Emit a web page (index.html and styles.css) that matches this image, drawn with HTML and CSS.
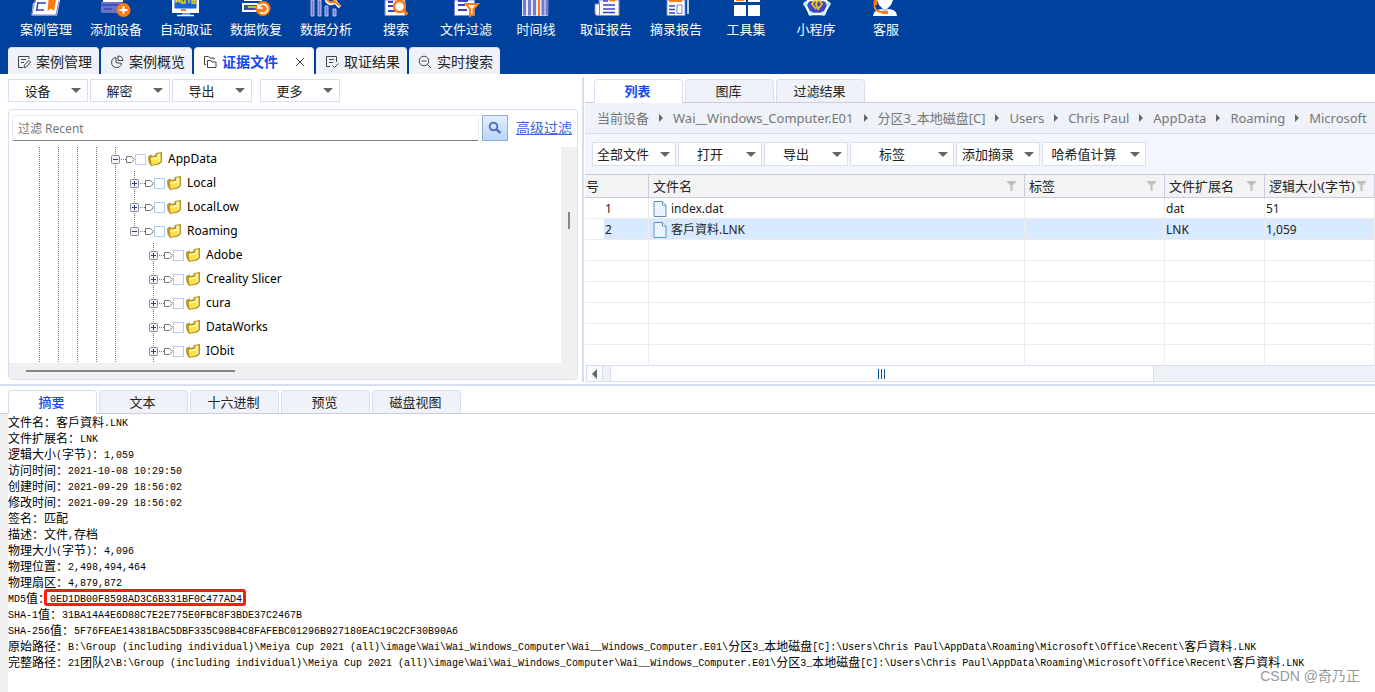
FILE: index.html
```html
<!DOCTYPE html>
<html lang="zh-CN">
<head>
<meta charset="utf-8">
<title>证据文件</title>
<link rel="stylesheet" href="styles.css">
</head>
<body>
<svg class="defs" aria-hidden="true">
  <symbol id="plus" viewBox="0 0 9 9"><rect x=".5" y=".5" width="8" height="8" rx="1" fill="#f2f2f2" stroke="#8c8c8c"/><path d="M2 4.500h5M4.500 2v5" stroke="#2b3f8c"/></symbol>
  <symbol id="minus" viewBox="0 0 9 9"><rect x=".5" y=".5" width="8" height="8" rx="1" fill="#f2f2f2" stroke="#8c8c8c"/><path d="M2 4.500h5" stroke="#2b3f8c"/></symbol>
  <symbol id="tag" viewBox="0 0 14 7"><path d="M0 3h1v1H0zM2 3h1v1H2zM4 3h1v1H4z" fill="#777"/><path d="M5.500.500h5l3 3-3 3h-5z" fill="#fff" stroke="#777"/></symbol>
  <symbol id="folder" viewBox="0 0 15 14"><path d="M.5 4.500L3 3l1.500 1.500L8 3.500V1.500l5.500-1V10L11 12l-8 1.500L1 10z" fill="#c99f22" stroke="#a07a12" stroke-width=".8"/><path d="M9 2l3.500-.8v8.300L10 11z" fill="#fdf0a0"/><path d="M3 6l8-1.500-1 7-6.500 1.500z" fill="#fde04a"/><path d="M3 6l8-1.500-.3 2-7.500 1.800z" fill="#fff19a"/></symbol>
  <symbol id="funnel" viewBox="0 0 9 10"><path d="M0 0h9v1L5.500 4.500V10h-2V4.500L0 1z" fill="#c0c0c0"/></symbol>
  <symbol id="page" viewBox="0 0 14 16"><path d="M1 .500h8.500L13 4v11.500H1z" fill="#e9f4fe" stroke="#6291c0"/><path d="M9.500.500V4H13" fill="#fff" stroke="#6291c0"/></symbol>
</svg>

<header class="banner">
  <nav class="tools" aria-label="工具">
    <button class="tool"><svg viewBox="0 0 32 18"><path d="M6 0h24l-3 15.500H1.500L3 3h2z" fill="#fff"/><path d="M5 0L2 14.500M29 1l-3 14H2" stroke="#7a80cf" fill="none"/><path d="M8 3h8M7 10h7M8 2L6.500 11" stroke="#2e3fc4" stroke-width="1.500" fill="none"/><path d="M18.500 0H26l-2 11-3-2.500L17.500 11z" fill="#ff7a0f"/></svg><span>案例管理</span></button>
    <button class="tool"><svg viewBox="0 0 32 18"><path d="M1 3l3-3h18v13H1z" fill="#6a72c6"/><path d="M3 1h20" stroke="#fff" stroke-width="2"/><path d="M1 5h20M4 9h8" stroke="#3348b4" stroke-width="1.500"/><circle cx="23.500" cy="10" r="7" fill="#ff7a0f"/><path d="M19.500 10h8M23.500 6v8" stroke="#fff" stroke-width="2"/></svg><span>添加设备</span></button>
    <button class="tool"><svg viewBox="0 0 32 18"><path d="M2 0h27v13H2z" fill="#fff"/><path d="M4.500 0h22v8.500h-22z" fill="#1763da"/><path d="M6 3V0M10 3V0M6 1h4M12 0v3h3V0M19 3V0M22 0h3v3h-3z" fill="none" stroke="#ffe000" stroke-width="1.300"/><path d="M11 9h5v2h-5z" fill="#ff7a0f"/><path d="M12 14h8" stroke="#8b91db" stroke-width="2"/><path d="M7 15.500h17" stroke="#fff" stroke-width="1.500"/></svg><span>自动取证</span></button>
    <button class="tool"><svg viewBox="0 0 32 18"><path d="M4 0h18M3 4h16v7H3z" stroke="#fff" stroke-width="2" fill="#3d4cba"/><path d="M8 7h8" stroke="#ffe000" stroke-width="1.500"/><circle cx="23" cy="8.500" r="7.500" fill="#ff7a0f"/><path d="M20 12a4.500 4.500 0 1 0-1-5M18 4v4h5" fill="none" stroke="#fff" stroke-width="1.700"/></svg><span>数据恢复</span></button>
    <button class="tool"><svg viewBox="0 0 32 18"><path d="M1 0h3v16H1zM8 0h3v16H8zM15 6h3v10h-3zM23 9h3v7h-3z" fill="#7278cd" stroke="#d9dbf7" stroke-width=".8"/><path d="M16 0q5 7 10 0M24 1l6 6" fill="none" stroke="#fff" stroke-width="3.500"/><path d="M17 0q4 5 8 0M24 1l6 5" fill="none" stroke="#ff7a0f" stroke-width="2"/></svg><span>数据分析</span></button>
    <button class="tool"><svg viewBox="0 0 32 18"><path d="M5 0h20v15.500H5z" fill="#fff" stroke="#8589d0"/><path d="M8 2h5M8 6h5M8 11h7" stroke="#3940cb" stroke-width="2"/><circle cx="19.500" cy="6.500" r="5.500" fill="#fff" stroke="#ff7a0f" stroke-width="2.500"/><path d="M23.500 10.500l4 4" stroke="#ff7a0f" stroke-width="3"/></svg><span>搜索</span></button>
    <button class="tool"><svg viewBox="0 0 32 18"><path d="M4.500 0h20v15.500h-20z" fill="#fff" stroke="#8589d0"/><path d="M8 1h10M8 5h7M8 10h9" stroke="#3940cb" stroke-width="2"/><path d="M16 4h12l-4.500 5v5L20 16V9z" fill="#fff" stroke="#ff7a0f" stroke-width="2"/></svg><span>文件过滤</span></button>
    <button class="tool"><svg viewBox="0 0 32 18"><path d="M2 0h26v16H2z" fill="#e7e8fb"/><path d="M4.500 0v15.500M9.500 0v15.500M14.500 0v15.500M23 0v15.500M27 0v15.500" stroke="#737bd0" stroke-width="3"/><path d="M19 0v16" stroke="#ff7a0f" stroke-width="2"/></svg><span>时间线</span></button>
    <button class="tool"><svg viewBox="0 0 32 18"><path d="M5 4h4V0h20v15.500H7Q4.500 15 5 12z" fill="#fff" stroke="#8589d0"/><path d="M9.500 2v13" stroke="#8589d0"/><path d="M13 1h5M13 5h12M13 9h12M13 12.500h12" stroke="#3940cb" stroke-width="1.500"/><path d="M20 0h5v2l-2.500-1L20 2z" fill="#ff7a0f"/></svg><span>取证报告</span></button>
    <button class="tool"><svg viewBox="0 0 32 18"><path d="M7 0h18v15.500H7z" fill="#fff" stroke="#8589d0"/><path d="M9 0h13v2H9z" fill="#ff7a0f"/><path d="M9 6h6M9 9.500h6M9 13h6" stroke="#3940cb" stroke-width="1.500"/><path d="M17 5h5v8.500h-5z" fill="#fff" stroke="#777dcc"/><path d="M28 0v14" stroke="#fff" stroke-width="1.500"/></svg><span>摘录报告</span></button>
    <button class="tool"><svg viewBox="0 0 32 18"><path d="M4 0h12v2H4zM18 0h12v2H18zM4 5h12v11H4zM18 5h12v11H18z" fill="#fff"/><path d="M6 0h8v1H6z" fill="#ff7a0f"/></svg><span>工具集</span></button>
    <button class="tool"><svg viewBox="0 0 32 18"><path d="M9 0L5 4l5 10h14l5-10-4-4z" fill="#3e48cb" stroke="#fff" stroke-width="2.500"/><circle cx="5.500" cy="4" r="2.200" fill="#c9f3ff"/><circle cx="28.500" cy="4" r="2.200" fill="#c9f3ff"/><circle cx="10.500" cy="13.500" r="2.200" fill="#c9f3ff"/><circle cx="23.500" cy="13.500" r="2.200" fill="#c9f3ff"/><path d="M15 0l-3 4 4 5M18 0l-2 4 2 5 4-5-3-4" fill="none" stroke="#ffc400" stroke-width="1.700"/></svg><span>小程序</span></button>
    <button class="tool"><svg viewBox="0 0 32 18"><path d="M7 0h16l-2 5-4 4h-4L9 5z" fill="#fff"/><path d="M3 16q0-6 9-7h7q8 1 8 7z" fill="#fff"/><path d="M12 9l3 4 4-4" fill="#bfc4f0"/><path d="M4.500 1v6q1 5 10 5.500" fill="none" stroke="#ff7a0f" stroke-width="1.800"/><path d="M4 0h3v5H4zM12 11h6v3h-6z" fill="#ff7a0f"/></svg><span>客服</span></button>
  </nav>
  <nav class="views" aria-label="视图">
    <button class="view"><svg viewBox="0 0 14 14"><path d="M12 4V1.500H1.500v11H6M4 4.500h5M4 7.500h3M7 12.500l.5-2.500 4.500-4.500 1.500 1.500L9.500 12z"/></svg>案例管理</button>
    <button class="view"><svg viewBox="0 0 14 14"><path d="M6 2.500a5 5 0 1 0 5.500 6L6 7.500zM8 1v4.500h5A5 5 0 0 0 8 1z"/></svg>案例概览</button>
    <button class="view view-on"><svg viewBox="0 0 14 14"><path d="M3 9.500H1.500v-8h4L7 3h4v1.500M4.500 5.500H8L9 7h4v5.500H4.500z"/></svg>证据文件<svg class="close" viewBox="0 0 14 14"><path d="M3 3l8 8M11 3l-8 8"/></svg></button>
    <button class="view"><svg viewBox="0 0 14 14"><path d="M5 11.500H1.500v-10h10V7M4 4.500h5M4 7.500h4M7.500 10.500l2 2 4-4"/></svg>取证结果</button>
    <button class="view"><svg viewBox="0 0 14 14"><circle cx="6" cy="6" r="4.800"/><path d="M3.500 6h5M9.500 9.500L13 13"/></svg>实时搜索</button>
  </nav>
</header>

<main class="work">
  <section class="left">
    <div class="menus">
      <button class="menu"><span>设备</span></button>
      <button class="menu"><span>解密</span></button>
      <button class="menu"><span>导出</span></button>
      <button class="menu menu-apart"><span>更多</span></button>
    </div>
    <div class="panel">
      <form class="filter">
        <input class="filter-text" type="text" placeholder="过滤 Recent" aria-label="过滤">
        <button class="filter-go" type="button" aria-label="搜索"><svg viewBox="0 0 14 14"><circle cx="5.500" cy="5.500" r="3.800" fill="none" stroke="#4f78bd" stroke-width="2"/><path d="M8.500 8.500l4 3.500" stroke="#4f78bd" stroke-width="2.500"/></svg></button>
        <a class="filter-more" href="#">高级过滤</a>
      </form>
      <div class="browse">
        <ul class="tree">
          <li class="node"><i class="guide"></i><i class="guide"></i><i class="guide"></i><i class="guide"></i><i class="guide"><svg><use href="#minus"/></svg></i><svg class="tag"><use href="#tag"/></svg><input type="checkbox" id="n1"><svg class="folder"><use href="#folder"/></svg><label for="n1">AppData</label></li>
          <li class="node"><i class="guide"></i><i class="guide"></i><i class="guide"></i><i class="guide"></i><i class="guide"></i><i class="guide"><svg><use href="#plus"/></svg></i><svg class="tag"><use href="#tag"/></svg><input type="checkbox" id="n2"><svg class="folder"><use href="#folder"/></svg><label for="n2">Local</label></li>
          <li class="node"><i class="guide"></i><i class="guide"></i><i class="guide"></i><i class="guide"></i><i class="guide"></i><i class="guide"><svg><use href="#plus"/></svg></i><svg class="tag"><use href="#tag"/></svg><input type="checkbox" id="n3"><svg class="folder"><use href="#folder"/></svg><label for="n3">LocalLow</label></li>
          <li class="node"><i class="guide"></i><i class="guide"></i><i class="guide"></i><i class="guide"></i><i class="guide"></i><i class="guide guide-last"><svg><use href="#minus"/></svg></i><svg class="tag"><use href="#tag"/></svg><input type="checkbox" id="n4"><svg class="folder"><use href="#folder"/></svg><label for="n4">Roaming</label></li>
          <li class="node"><i class="guide"></i><i class="guide"></i><i class="guide"></i><i class="guide"></i><i class="guide"></i><i class="space"></i><i class="guide"><svg><use href="#plus"/></svg></i><svg class="tag"><use href="#tag"/></svg><input type="checkbox" id="n5"><svg class="folder"><use href="#folder"/></svg><label for="n5">Adobe</label></li>
          <li class="node"><i class="guide"></i><i class="guide"></i><i class="guide"></i><i class="guide"></i><i class="guide"></i><i class="space"></i><i class="guide"><svg><use href="#plus"/></svg></i><svg class="tag"><use href="#tag"/></svg><input type="checkbox" id="n6"><svg class="folder"><use href="#folder"/></svg><label for="n6">Creality Slicer</label></li>
          <li class="node"><i class="guide"></i><i class="guide"></i><i class="guide"></i><i class="guide"></i><i class="guide"></i><i class="space"></i><i class="guide"><svg><use href="#plus"/></svg></i><svg class="tag"><use href="#tag"/></svg><input type="checkbox" id="n7"><svg class="folder"><use href="#folder"/></svg><label for="n7">cura</label></li>
          <li class="node"><i class="guide"></i><i class="guide"></i><i class="guide"></i><i class="guide"></i><i class="guide"></i><i class="space"></i><i class="guide"><svg><use href="#plus"/></svg></i><svg class="tag"><use href="#tag"/></svg><input type="checkbox" id="n8"><svg class="folder"><use href="#folder"/></svg><label for="n8">DataWorks</label></li>
          <li class="node"><i class="guide"></i><i class="guide"></i><i class="guide"></i><i class="guide"></i><i class="guide"></i><i class="space"></i><i class="guide"><svg><use href="#plus"/></svg></i><svg class="tag"><use href="#tag"/></svg><input type="checkbox" id="n9"><svg class="folder"><use href="#folder"/></svg><label for="n9">IObit</label></li>
        </ul>
        <div class="track-y"><div class="thumb-y"></div></div>
      </div>
      <div class="track-x"><div class="thumb-x"></div></div>
    </div>
  </section>

  <section class="right">
    <div class="tabs tabs-right">
      <button class="tab tab-on tab-bold">列表</button>
      <button class="tab">图库</button>
      <button class="tab">过滤结果</button>
    </div>
    <nav class="crumbs" aria-label="路径">
      <a href="#">当前设备</a><a href="#">Wai__Windows_Computer.E01</a><a href="#">分区3_本地磁盘[C]</a><a href="#">Users</a><a href="#">Chris Paul</a><a href="#">AppData</a><a href="#">Roaming</a><a href="#">Microsoft</a>
    </nav>
    <div class="menus menus-files">
      <button class="menu menu-mid menu-pick"><span>全部文件</span></button>
      <button class="menu menu-mid"><span>打开</span></button>
      <button class="menu menu-mid"><span>导出</span></button>
      <button class="menu menu-wide"><span>标签</span></button>
      <button class="menu menu-mid"><span>添加摘录</span></button>
      <button class="menu menu-wide"><span>哈希值计算</span></button>
    </div>
    <table class="files">
      <colgroup><col class="c-num"><col><col class="c-tag"><col class="c-ext"><col class="c-size"></colgroup>
      <thead>
        <tr><th>号</th><th><div class="head">文件名<svg><use href="#funnel"/></svg></div></th><th><div class="head">标签<svg><use href="#funnel"/></svg></div></th><th><div class="head">文件扩展名<svg><use href="#funnel"/></svg></div></th><th><div class="head">逻辑大小(字节)<svg><use href="#funnel"/></svg></div></th></tr>
      </thead>
      <tbody>
        <tr><td>1</td><td><div class="name"><svg><use href="#page"/></svg>index.dat</div></td><td></td><td>dat</td><td>51</td></tr>
        <tr class="picked"><td>2</td><td><div class="name"><svg><use href="#page"/></svg>客戶資料.LNK</div></td><td></td><td>LNK</td><td>1,059</td></tr>
        <tr><td></td><td></td><td></td><td></td><td></td></tr>
        <tr><td></td><td></td><td></td><td></td><td></td></tr>
        <tr><td></td><td></td><td></td><td></td><td></td></tr>
        <tr><td></td><td></td><td></td><td></td><td></td></tr>
        <tr><td></td><td></td><td></td><td></td><td></td></tr>
        <tr><td></td><td></td><td></td><td></td><td></td></tr>
      </tbody>
    </table>
    <div class="slider">
      <button class="slider-back" aria-label="向左滚动"></button>
      <div class="slider-thumb"><i></i><i></i><i></i></div>
    </div>
  </section>
</main>

<section class="detail">
  <div class="tabs tabs-detail">
    <button class="tab tab-on">摘要</button>
    <button class="tab">文本</button>
    <button class="tab">十六进制</button>
    <button class="tab">预览</button>
    <button class="tab">磁盘视图</button>
  </div>
  <div class="summary">
    <p>文件名：客戶資料<b>.LNK</b></p>
    <p>文件扩展名：<b>LNK</b></p>
    <p>逻辑大小<b>(</b>字节<b>)</b>：<b>1,059</b></p>
    <p>访问时间：<b>2021-10-08 10:29:50</b></p>
    <p>创建时间：<b>2021-09-29 18:56:02</b></p>
    <p>修改时间：<b>2021-09-29 18:56:02</b></p>
    <p>签名：匹配</p>
    <p>描述：文件<b>,</b>存档</p>
    <p>物理大小<b>(</b>字节<b>)</b>：<b>4,096</b></p>
    <p>物理位置：<b>2,498,494,464</b></p>
    <p>物理扇区：<b>4,879,872</b></p>
    <p><b>MD5</b>值：<span class="mark"><b>0ED1DB00F8598AD3C6B331BF0C477AD4</b></span></p>
    <p><b>SHA-1</b>值：<b>31BA14A4E6D88C7E2E775E0FBC8F3BDE37C2467B</b></p>
    <p><b>SHA-256</b>值：<b>5F76FEAE14381BAC5DBF335C98B4C8FAFEBC01296B927180EAC19C2CF30B90A6</b></p>
    <p>原始路径：<b>B:\Group (including individual)\Meiya Cup 2021 (all)\image\Wai\Wai_Windows_Computer\Wai__Windows_Computer.E01\</b>分区<b>3_</b>本地磁盘<b>[C]:\Users\Chris Paul\AppData\Roaming\Microsoft\Office\Recent\</b>客戶資料<b>.LNK</b></p>
    <p>完整路径：<b>21</b>团队<b>2\B:\Group (including individual)\Meiya Cup 2021 (all)\image\Wai\Wai_Windows_Computer\Wai__Windows_Computer.E01\</b>分区<b>3_</b>本地磁盘<b>[C]:\Users\Chris Paul\AppData\Roaming\Microsoft\Office\Recent\</b>客戶資料<b>.LNK</b></p>
  </div>
  <div class="watermark">CSDN @奇乃正</div>
</section>
</body>
</html>
```
FILE: styles.css
```css
* { box-sizing: border-box; }
body {
  margin: 0;
  min-height: 100vh;
  display: flex;
  flex-direction: column;
  background: #fff;
  color: #222;
  font: 13px/18px "Noto Sans", "Noto Sans CJK SC", sans-serif;
  overflow-x: hidden;
}
button, input { font: inherit; color: inherit; margin: 0; }
button { padding: 0; border: 0; background: none; white-space: nowrap; }
svg { display: block; flex: none; }
.defs { position: absolute; width: 0; height: 0; }

/* banner */
.banner { background: #00419d; }
.tools { display: flex; padding-left: 11px; }
.tool {
  width: 70px;
  display: flex;
  flex-direction: column;
  align-items: center;
  gap: 2px;
  color: #fff;
}
.tool svg { width: 32px; height: 18px; }
.views { display: flex; gap: 2px; padding: 9px 8px 0; }
.view {
  height: 27px;
  padding: 2px 7px 0 9px;
  display: flex;
  align-items: center;
  gap: 5px;
  font-size: 14px;
  background: #eff3f9;
  border: solid #d5dff0;
  border-width: 1px 0 0;
  border-radius: 4px 4px 0 0;
}
.view svg { width: 14px; height: 14px; fill: none; stroke: #444; }
.view-on { background: #fff; color: #1648ee; font-weight: bold; }
.view .close { margin-left: 10px; }

/* drop-down buttons */
.menus { display: flex; gap: 2px; }
.menu {
  width: 80px;
  height: 23px;
  padding-right: 6px;
  display: flex;
  align-items: center;
  background: #fff;
  border: 1px solid #d5dff0;
}
.menu span { flex: 1; padding-right: 5px; text-align: center; }
.menu::after {
  content: "";
  border: 5px solid transparent;
  border-top-color: #666;
  border-bottom: 0;
}
.menu-apart { margin-left: 6px; }
.menu-mid { width: 84px; }
.menu-wide { width: 104px; }
.menus-files .menu { height: 24px; padding-right: 5px; }
.menus-files .menu-pick span { padding-left: 4px; text-align: left; }

/* work area */
.work { display: flex; border-bottom: 2px solid #d5dff0; padding: 3px 0 2px; }
.left { flex: 0 1 584px; min-width: 0; padding: 2px 4px 2px 8px; border-right: 2px solid #d5dff0; }
.right { flex: 1; min-width: 0; padding-top: 2px; margin-left: 1px; overflow: hidden; }
.panel { margin-top: 7px; padding-top: 5px; border: 1px solid #d5dff0; border-radius: 4px; overflow: hidden; }
.filter { display: flex; align-items: center; padding: 0 5px 0 3px; }
.filter-text {
  flex: 1;
  min-width: 0;
  height: 26px;
  padding: 0 5px;
  border: 1px solid #ececec;
  border-bottom-color: #808080;
  border-radius: 2px;
  font-size: 12px;
}
.filter-text::placeholder { color: #777; opacity: 1; }
.filter-go {
  width: 26px;
  height: 26px;
  margin: 0 8px 0 3px;
  display: grid;
  place-items: center;
  background: linear-gradient(#e3efff, #bcd5f7);
  border: 1px solid #8eadda;
}
.filter-go svg { width: 14px; height: 14px; }
.filter-more { font-size: 14px; color: #3a66d8; }
.browse { display: flex; margin-top: 6px; }
.tree { flex: 1; margin: 0; padding: 0 0 0 21px; list-style: none; font-size: 12px; color: #000; }
.node { display: flex; align-items: center; height: 24px; }
.guide, .space { width: 19px; height: 24px; flex: none; }
.guide {
  display: grid;
  place-items: center;
  background: repeating-linear-gradient(#777 0 1px, transparent 1px 2px) 9px 0 / 1px 24px no-repeat;
}
.guide-last { background-size: 1px 12px; }
.guide svg { width: 9px; height: 9px; }
.tag { width: 14px; height: 7px; margin-left: -4px; }
.node input {
  appearance: none;
  width: 11px;
  height: 11px;
  margin: 0 2px 0 0;
  background: #fff;
  border: 1px solid #b8ccfa;
}
.folder { width: 15px; height: 14px; margin-right: 5px; }
.track-y { width: 16px; padding-top: 65px; background: #f0f0f0; }
.thumb-y { width: 2px; height: 17px; margin: auto; background: #858585; }
.track-x { height: 16px; padding: 7px 0 0 17px; background: #f0f0f0; }
.thumb-x { width: 38%; height: 2px; background: #858585; }

/* tabs */
.tabs { display: flex; gap: 2px; border-bottom: 1px solid #ccccdc; }
.tabs-right { padding-left: 9px; }
.tabs-detail { padding-left: 8px; }
.tab {
  width: 89px;
  height: 23px;
  padding: 0 2px 1px 0;
  background: #eff3f9;
  border: 1px solid #d5dff0;
  border-bottom: 0;
  border-radius: 4px 4px 0 0;
}
.tab-on { height: 24px; padding-bottom: 2px; margin-bottom: -1px; background: #fff; color: #1648ee; font-weight: 500; }
.tab-bold { font-weight: bold; }

/* path */
.crumbs {
  display: flex;
  align-items: center;
  height: 31px;
  padding-left: 12px;
  background: #eff2f8;
  border-bottom: 1px solid #d5dff0;
  white-space: nowrap;
}
.crumbs a { display: flex; align-items: center; color: #777; text-decoration: none; }
.crumbs a + a::before {
  content: "";
  margin: 0 10px;
  border: 4px solid transparent;
  border-left-color: #666;
  border-right: 0;
}
.menus-files { padding: 8px 7px; background: #f3f6fc; }

/* file table */
.files { width: 100%; table-layout: fixed; border-collapse: separate; border-spacing: 0; }
.c-num { width: 64px; }
.c-tag { width: 140px; }
.c-ext { width: 100px; }
.c-size { width: 110px; }
.files th {
  height: 24px;
  padding: 0 0 0 4px;
  text-align: left;
  font-weight: normal;
  white-space: nowrap;
  background: #f3f3f3;
  border: solid #c9cbde;
  border-width: 1px 1px 1px 0;
}
.files th:first-child { padding-left: 1px; }
.head { display: flex; align-items: center; justify-content: space-between; padding-right: 8px; }
.head svg { width: 9px; height: 10px; }
.files td {
  height: 21px;
  padding: 2px 0 0 1px;
  font-size: 12px;
  border: solid #ececec;
  border-width: 0 1px 1px 0;
}
.files td:first-child { padding-left: 20px; }
.name { display: flex; align-items: center; gap: 4px; padding-left: 3px; }
.name svg { width: 14px; height: 16px; }
.picked td { background: #d9e9ff; }
.picked td:first-child { background: linear-gradient(to right, #fff 19px, #d9e9ff 19px); }

.slider {
  display: flex;
  height: 17px;
  margin: -1px 0 0 1px;
  background: #eef1f7;
  border: 1px solid #d5dff0;
  border-right: 0;
  position: relative;
}
.slider-back { width: 16px; display: grid; place-items: center; background: #f8fafd; border-right: 1px solid #d5dff0; }
.slider-back::before { content: ""; border: 5px solid transparent; border-right-color: #666; border-left: 0; }
.slider-thumb {
  width: 69%;
  margin-left: 7px;
  display: flex;
  align-items: center;
  justify-content: center;
  gap: 2px;
  background: #fff;
  border: solid #d5dff0;
  border-width: 0 1px;
}
.slider-thumb i { width: 1px; height: 10px; background: #12509e; }

/* detail */
.detail { flex: 1; display: flex; flex-direction: column; padding-top: 4px; position: relative; }
.summary {
  flex: 1;
  padding-bottom: 22px;
  border-left: 8px solid #f0f0f0;
  color: #000;
  font: 12px/16px "Noto Sans CJK SC", sans-serif;
  white-space: nowrap;
}
.summary p { margin: 0; height: 16px; }
.summary b { font: 10px/14px "Liberation Mono", monospace; vertical-align: 1px; }
.mark { position: relative; }
.mark::after {
  content: "";
  position: absolute;
  inset: 0 -4px 0 -6px;
  border: 3px solid #fb1d12;
  border-radius: 3px;
}
.watermark {
  position: absolute;
  right: 15px;
  bottom: 7px;
  color: #999;
  font: 14px/18px "Liberation Sans", "Noto Sans CJK SC", sans-serif;
}
```
